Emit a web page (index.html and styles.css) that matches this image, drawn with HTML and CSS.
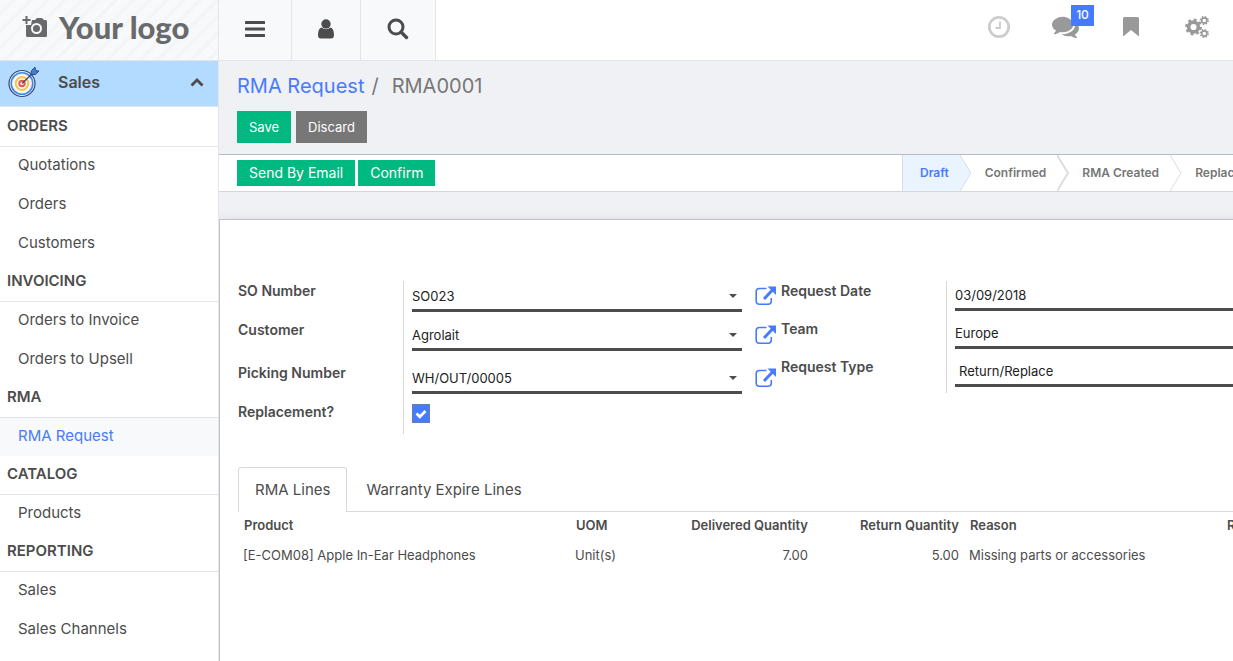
FILE: index.html
```html
<!DOCTYPE html>
<html lang="en">
<head>
<meta charset="utf-8">
<title>RMA0001 - RMA Request</title>
<link rel="stylesheet" href="styles.css">
</head>
<body>
<svg class="sprite" aria-hidden="true">
  <symbol id="i-external" viewBox="0 0 21 20">
    <path d="M11.5 2.500H4.500Q1.200 2.500 1.200 5.500V15Q1.200 18.300 4.500 18.300H13Q16.300 18.300 16.300 15V12" fill="none" stroke="currentColor" stroke-width="1.600"/>
    <path d="M9 13 17.500 4" stroke="currentColor" stroke-width="3" fill="none"/>
    <path d="M12.500.5H21V9Z" fill="currentColor"/>
  </symbol>
  <symbol id="i-caret" viewBox="0 0 8 4"><path d="M0 0H8L4 4Z" fill="currentColor"/></symbol>
</svg>
<aside class="sidebar">
  <a class="logo" href="#">
    <svg class="logo-icon" viewBox="0 0 26 24" aria-hidden="true">
      <path d="M10 5H13L15 3H20L22 5H23.500Q25 5 25 6.500V20.500Q25 22 23.500 22H5.500Q4 22 4 20.500V10H9Z" fill="#696a6b"/>
      <circle cx="14.500" cy="13.500" r="4.500" fill="none" stroke="#f8f9fb" stroke-width="2"/>
      <path d="M4.500 1V9M.5 5H8.500" stroke="#696a6b" stroke-width="2"/>
    </svg>
    <span>Your logo</span>
  </a>
  <button class="app" type="button">
    <svg class="app-icon" viewBox="0 0 32 32" aria-hidden="true">
      <circle cx="14" cy="17.500" r="13" fill="#e9f1fb" stroke="#3a4673" stroke-width="1.200"/>
      <circle cx="14" cy="17.500" r="10.800" fill="none" stroke="#3f8be0" stroke-width="1.600"/>
      <circle cx="14" cy="17.500" r="8.600" fill="#fff"/>
      <circle cx="14" cy="17.500" r="6.300" fill="#fff" stroke="#fbc54c" stroke-width="2.200"/>
      <circle cx="14" cy="17.500" r="2.700" fill="#fff" stroke="#ee5348" stroke-width="2"/>
      <path d="M14 17.500 26 6" stroke="#3a4673" stroke-width="1.300"/>
      <path d="M23 8.500 23.500 4.500 27 1 27.500 4.500 31 5 27.500 8.500Z" fill="#3f7fd0" stroke="#2f4f86"/>
    </svg>
    <span class="app-name">Sales</span>
    <svg class="chevron" viewBox="0 0 14 9" aria-hidden="true"><path d="M1.500 7.500 7 2 12.500 7.500" fill="none" stroke="#4c4c4c" stroke-width="2.800"/></svg>
  </button>
  <nav>
    <h2>ORDERS</h2>
    <ul><li><a href="#">Quotations</a></li><li><a href="#">Orders</a></li><li><a href="#">Customers</a></li></ul>
    <h2>INVOICING</h2>
    <ul><li><a href="#">Orders to Invoice</a></li><li><a href="#">Orders to Upsell</a></li></ul>
    <h2>RMA</h2>
    <ul><li><a class="active" href="#">RMA Request</a></li></ul>
    <h2>CATALOG</h2>
    <ul><li><a href="#">Products</a></li></ul>
    <h2>REPORTING</h2>
    <ul><li><a href="#">Sales</a></li><li><a href="#">Sales Channels</a></li></ul>
  </nav>
</aside>
<div class="main">
  <header class="topbar">
    <button class="tool" type="button" aria-label="Menu"><svg width="20" height="20" viewBox="0 0 20 20"><path d="M1 3.500H19M1 10H19M1 16.500H19" stroke="currentColor" stroke-width="3" stroke-linecap="round"/></svg></button>
    <button class="tool narrow" type="button" aria-label="User"><svg width="18" height="20" viewBox="0 0 18 20"><circle cx="9" cy="5" r="4.700" fill="currentColor"/><path d="M4.500 8.500Q9 12 13.500 8.500Q17 9.500 17 16Q17 19.500 14 19.500H4Q1 19.500 1 16Q1 9.500 4.500 8.500Z" fill="currentColor"/></svg></button>
    <button class="tool wide" type="button" aria-label="Search"><svg width="22" height="22" viewBox="0 0 22 22"><circle cx="9" cy="9" r="7" fill="none" stroke="currentColor" stroke-width="3"/><path d="M14 14 19.500 19.500" stroke="currentColor" stroke-width="3.400" stroke-linecap="round"/></svg></button>
    <div class="systray">
      <button class="tray" type="button" aria-label="Activities"><svg class="pale" width="24" height="24" viewBox="0 0 24 24"><circle cx="12" cy="12" r="9.700" fill="none" stroke="currentColor" stroke-width="2.700"/><path d="M13 6.500V13H8.500" fill="none" stroke="currentColor" stroke-width="1.800"/></svg></button>
      <button class="tray" type="button" aria-label="Messages"><svg width="27" height="27" viewBox="0 0 1792 1792"><path fill="currentColor" d="M1408 768q0 139-94 257t-256.500 186.500-353.500 68.500q-86 0-176-16-124 88-278 128-36 9-86 16h-3q-11 0-20.500-8t-11.500-21q-1-3-1-6.500t.5-6.500 2-6l2.500-5 3.500-5.500 4-5 4.500-5 4-4.500q5-6 23-25t26-29.500 22.500-29 25-38.500 20.500-44q-124-72-195-177t-71-224q0-139 94-257t256.500-186.500 353.500-68.500 353.500 68.500 256.500 186.500 94 257zm384 256q0 120-71 224.500t-195 176.500q10 24 20.500 44t25 38.500 22.500 29 26 29.500 23 25q1 1 4 4.500t4.500 5 4 5 3.500 5.500l2.500 5 2 6 .5 6.500-1 6.500q-3 14-13 22t-22 7q-50-7-86-16-154-40-278-128-90 16-176 16-271 0-472-132 58 4 88 4 161 0 309-45t264-129q125-92 192-212t67-254q0-77-23-152 129 71 204 178t75 230z"/></svg><span class="badge">10</span></button>
      <button class="tray" type="button" aria-label="Bookmarks"><svg width="18" height="22" viewBox="0 0 18 22"><path fill="currentColor" d="M2.500 1H15.500Q17 1 17 2.500V20.500L9 14 1 20.500V2.500Q1 1 2.500 1Z"/></svg></button>
      <button class="tray" type="button" aria-label="Settings"><svg width="24" height="24" viewBox="0 0 24 24" fill="none" stroke="currentColor">
        <circle cx="8.500" cy="12" r="4.900" stroke-width="3.600"/><circle cx="8.500" cy="12" r="7.300" stroke-width="2.200" stroke-dasharray="2.870 2.863"/>
        <circle cx="19.300" cy="5.500" r="2.600" stroke-width="1.600"/><circle cx="19.300" cy="5.500" r="3.900" stroke-width="1.400" stroke-dasharray="1.530 1.533"/>
        <circle cx="19.300" cy="18.500" r="2.600" stroke-width="1.600"/><circle cx="19.300" cy="18.500" r="3.900" stroke-width="1.400" stroke-dasharray="1.530 1.533"/>
      </svg></button>
    </div>
  </header>
  <div class="content">
    <section class="panel">
      <div class="crumbs"><a href="#">RMA Request</a><span>/</span><span class="current">RMA0001</span></div>
      <div class="actions"><button class="btn" type="button">Save</button><button class="btn grey" type="button">Discard</button></div>
    </section>
    <section class="statusbar">
      <div class="flow"><button class="btn small" type="button">Send By Email</button><button class="btn small" type="button">Confirm</button></div>
      <ol class="steps">
        <li class="on">Draft<svg viewBox="0 0 12 36" aria-hidden="true"><path d="M0 0 11 18 0 36"/></svg></li>
        <li>Confirmed<svg class="bold" viewBox="0 0 12 36" aria-hidden="true"><path d="M0 0 11 18 0 36"/></svg></li>
        <li>RMA Created<svg viewBox="0 0 12 36" aria-hidden="true"><path d="M0 0 11 18 0 36"/></svg></li>
        <li>Replaced</li>
      </ol>
    </section>
    <main class="sheet">
      <form class="groups">
        <div class="group">
          <label for="so">SO Number</label>
          <div class="field"><div class="pick"><select id="so"><option>SO023</option></select><svg><use href="#i-caret"/></svg></div><button class="open" type="button" aria-label="Open order"><svg><use href="#i-external"/></svg></button></div>
          <label for="customer">Customer</label>
          <div class="field"><div class="pick"><select id="customer"><option>Agrolait</option></select><svg><use href="#i-caret"/></svg></div><button class="open" type="button" aria-label="Open customer"><svg><use href="#i-external"/></svg></button></div>
          <label for="picking">Picking Number</label>
          <div class="field"><div class="pick"><select id="picking"><option>WH/OUT/00005</option></select><svg><use href="#i-caret"/></svg></div><button class="open" type="button" aria-label="Open picking"><svg><use href="#i-external"/></svg></button></div>
          <label for="replacement">Replacement?</label>
          <div class="field check"><input id="replacement" type="checkbox" checked><svg viewBox="0 0 12 10" aria-hidden="true"><path d="M1.500 4.500 4.800 7.800 10.500 2" fill="none" stroke="#fff" stroke-width="2.800"/></svg></div>
        </div>
        <div class="group second">
          <label for="date">Request Date</label>
          <div class="field"><input id="date" type="text" value="03/09/2018"></div>
          <label for="team">Team</label>
          <div class="field"><input id="team" type="text" value="Europe"></div>
          <label for="type">Request Type</label>
          <div class="field"><select id="type" class="inset"><option>Return/Replace</option></select></div>
        </div>
      </form>
      <div class="tabs" role="tablist"><button class="tab selected" type="button" role="tab" aria-selected="true">RMA Lines</button><button class="tab" type="button" role="tab" aria-selected="false">Warranty Expire Lines</button></div>
      <table>
        <colgroup><col class="c-product"><col class="c-uom"><col class="c-qty"><col class="c-qty"><col class="c-reason"><col></colgroup>
        <thead><tr><th>Product</th><th>UOM</th><th class="num">Delivered Quantity</th><th class="num">Return Quantity</th><th>Reason</th><th>Replace</th></tr></thead>
        <tbody><tr><td>[E-COM08] Apple In-Ear Headphones</td><td>Unit(s)</td><td class="num">7.00</td><td class="num">5.00</td><td>Missing parts or accessories</td><td></td></tr></tbody>
      </table>
    </main>
  </div>
</div>
</body>
</html>
```
FILE: styles.css
```css
* { box-sizing: border-box; }
body {
  margin: 0;
  display: flex;
  min-height: 100vh;
  overflow: hidden;
  background: #fff;
  color: #4c4c4c;
  font: 14px/20px Inter, "Open Sans", sans-serif;
}
button, input, select { font: inherit; color: inherit; margin: 0; padding: 0; border: 0; background: none; }
button { cursor: pointer; }
a { color: inherit; text-decoration: none; }
ul, ol { list-style: none; margin: 0; padding: 0; }
svg { display: block; flex: none; }
.sprite { position: absolute; width: 0; height: 0; }

.sidebar { flex: none; width: 219px; border-right: 1px solid #e4e5e8; }
.logo {
  display: flex;
  align-items: center;
  height: 61px;
  padding: 0 8px 6px 22px;
  gap: 11px;
  border-bottom: 1px solid #e4e5e8;
  background: repeating-linear-gradient(135deg, #f8f9fb 0 8px, #f4f5f7 8px 12px);
  color: #696a6b;
  font: 900 31px/36px Lato, sans-serif;
  white-space: nowrap;
}
.logo-icon { width: 26px; height: 24px; }
.app {
  display: flex;
  align-items: center;
  width: 100%;
  height: 46px;
  padding: 0 14px 3px 8px;
  border-bottom: 1px solid #dfe4ea;
  background: #b3daff;
  text-align: left;
}
.app-icon { width: 32px; height: 32px; }
.app-name { flex: 1; padding-left: 18px; font-size: 16px; font-weight: 600; }
.chevron { width: 14px; height: 9px; }
nav { padding-top: 1px; font-size: 15px; }
nav h2 {
  height: 39px;
  margin: 0;
  padding: 0 7px;
  border-bottom: 1px solid #e4e5e8;
  font-size: 15px;
  font-weight: 600;
  line-height: 36px;
}
nav li + li { margin-top: 1px; }
nav a { display: block; height: 38px; padding: 0 18px; line-height: 36px; }
nav a.active { background: #f8f9fb; color: #477bff; }

.main { flex: 1; min-width: 0; overflow: hidden; display: flex; flex-direction: column; }
.topbar { display: flex; height: 61px; border-bottom: 1px solid #e4e5e8; }
.tool {
  display: grid;
  place-items: center;
  width: 73px;
  padding-bottom: 3px;
  border-right: 1px solid #e4e5e8;
  background: #f8f9fb;
}
.tool.narrow { width: 69px; }
.tool.wide { width: 75px; }
.systray { display: flex; margin-left: auto; padding-right: 3px; color: #999; }
.tray { position: relative; display: grid; place-items: center; width: 66px; padding-bottom: 7px; }
.pale { color: #ccc; }
.badge {
  position: absolute;
  top: 5px;
  left: 39px;
  width: 23px;
  height: 21px;
  background: #477bff;
  color: #fff;
  font-size: 12px;
  font-weight: 500;
  line-height: 20px;
}

.content { flex: 1; min-width: 1125px; display: flex; flex-direction: column; background: #f0f1f5; }
.panel { padding: 14px 18px 11px; border-bottom: 1px solid #b6b8cc; }
.crumbs { display: flex; gap: 7px; font-size: 20px; line-height: 22px; color: #777; }
.crumbs a { color: #477bff; }
.crumbs .current { margin-left: 6px; }
.actions { display: flex; gap: 5px; margin-top: 14px; }
.btn { height: 32px; padding: 0 12px; background: #00b980; color: #fff; font-size: 13px; line-height: 30px; }
.btn.grey { background: #777; }
.btn.small { height: 26px; font-size: 14px; line-height: 26px; }
.statusbar {
  display: flex;
  justify-content: space-between;
  height: 37px;
  padding: 0 18px;
  border-bottom: 1px solid #d5d6da;
  background: #fff;
}
.flow { display: flex; align-items: center; gap: 3px; }
.steps { display: flex; min-width: 424px; border-left: 1px solid #dcdde0; font-size: 12px; font-weight: 600; line-height: 35px; color: #777; }
.steps li { position: relative; padding: 0 11px 0 25px; white-space: nowrap; }
.steps li:first-child { padding-left: 17px; }
.steps .on { background: #e9f4ff; color: #477bff; }
.steps svg { position: absolute; z-index: 1; left: 100%; top: 0; width: 12px; height: 36px; fill: #fff; stroke: #dcdde0; }
.steps .on svg { fill: #e9f4ff; }
.steps .bold { stroke-width: 2; }

.sheet {
  flex: 1;
  margin-top: 27px;
  padding: 61px 19px 0 18px;
  border: 1px solid #c2c2cf;
  border-bottom: 0;
  background: #fff;
  box-shadow: 0 0 10px #dcdde2;
}
.groups { display: grid; grid-template-columns: 1fr 1fr; align-items: start; }
.group { display: grid; grid-template-columns: 165px 1fr; grid-template-rows: 39px 43px 39px 32px; font-size: 13px; }
.group.second { grid-template-rows: 38px 38px 36px; }
.group label { font-size: 14px; font-weight: 600; }
.field { display: flex; align-items: start; gap: 13px; padding: 0 5px 0 8px; border-left: 1px solid #d9d9d9; color: #222; }
.pick { display: grid; flex: 1; align-items: center; }
.pick > * { grid-area: 1 / 1; }
.pick svg { justify-self: end; width: 8px; height: 4px; margin: 0 5px 2px 0; color: #4c4c4c; pointer-events: none; }
.field select, .field input[type="text"] {
  appearance: none;
  width: 100%;
  height: 31px;
  border-bottom: 3px solid #4c4c4c;
  border-radius: 0;
}
.pick select { padding-top: 2px; }
.group.second .field select, .group.second .field input { height: 30px; }
.field .inset { padding-left: 4px; }
.open { padding-top: 5px; color: #477bff; }
.open svg { width: 21px; height: 20px; }
.check { display: grid; justify-content: start; align-content: start; place-items: center; padding-top: 2px; }
.check > * { grid-area: 1 / 1; }
.check input { appearance: none; width: 18px; height: 19px; border: 1px solid #6d7ba5; background: #477bff; }
.check svg { width: 12px; height: 10px; pointer-events: none; }

.tabs { display: flex; gap: 2px; margin-top: 33px; border-bottom: 1px solid #d9d9d9; }
.tab { height: 44px; padding: 0 16px; border: 1px solid transparent; border-bottom: 0; line-height: 44px; font-size: 15px; }
.tab.selected { height: 45px; margin-bottom: -1px; border-color: #d9d9d9; border-radius: 3px 3px 0 0; background: #fff; }
table { width: 100%; table-layout: fixed; border-collapse: collapse; font-size: 13px; text-align: left; }
th { height: 26px; padding: 0 5px 0 6px; font-weight: 600; white-space: nowrap; }
td { height: 34px; padding: 0 5px; }
.num { text-align: right; }
.c-product { width: 332px; }
.c-uom { width: 92px; }
.c-qty { width: 151px; }
.c-reason { width: 257px; }
```
